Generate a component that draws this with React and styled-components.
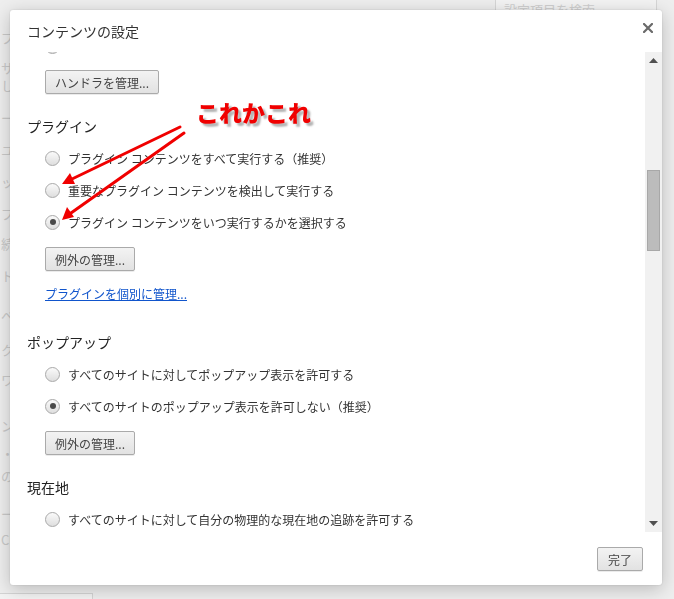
import styled, { createGlobalStyle } from 'styled-components';

const GlobalStyle = createGlobalStyle`
  html, body {
    margin: 0;
    padding: 0;
    background: #eeeeee;
    overflow: hidden;
  }
  body {
    font-family: "Noto Sans CJK JP", "Noto Sans", sans-serif;
  }
`;

const bgLines = [
  { t: 'プ', m: 30 },
  { t: 'サ', m: 14 },
  { t: 'し', m: 2 },
  { t: 'ー', m: 16 },
  { t: 'ユ', m: 16 },
  { t: 'ッ', m: 16 },
  { t: 'プ', m: 16 },
  { t: '続', m: 14 },
  { t: 'ト', m: 16 },
  { t: 'ベ', m: 24 },
  { t: 'ク', m: 18 },
  { t: 'ワ', m: 14 },
  { t: 'ン', m: 30 },
  { t: '・サ', m: 12 },
  { t: 'のス', m: 6 },
  { t: 'ー', m: 22 },
  { t: 'Ch', m: 10 },
];

const App = () => {
  return (
    <>
      <GlobalStyle />
      <Page>
        <BgColumn>
          {bgLines.map((line, index) => (
            <BgLine key={index} $top={line.m}>
              {line.t}
            </BgLine>
          ))}
        </BgColumn>
        <SearchBox>設定項目を検索</SearchBox>
        <BottomBox />
      </Page>

      <Dialog>
        <Header>
          <Title>コンテンツの設定</Title>
          <Close>
            <svg width="10" height="10" viewBox="0 0 10 10">
              <path
                d="M1 1 L9 9 M9 1 L1 9"
                stroke="#6a6a6a"
                strokeWidth="2.2"
                strokeLinecap="square"
              />
            </svg>
          </Close>
        </Header>

        <Body>
          <Content>
            <Inner>
              <RadioRow>
                <Radio />
              </RadioRow>
              <Button $top={8}>ハンドラを管理...</Button>

              <Heading $top={22}>プラグイン</Heading>
              <RadioGroup>
                <RadioRow>
                  <Radio />
                  <Label>プラグイン コンテンツをすべて実行する（推奨）</Label>
                </RadioRow>
                <RadioRow>
                  <Radio />
                  <Label>重要なプラグイン コンテンツを検出して実行する</Label>
                </RadioRow>
                <RadioRow>
                  <Radio $checked />
                  <Label>プラグイン コンテンツをいつ実行するかを選択する</Label>
                </RadioRow>
              </RadioGroup>
              <Button $top={9}>例外の管理...</Button>
              <Link>プラグインを個別に管理...</Link>

              <Heading $top={29}>ポップアップ</Heading>
              <RadioGroup>
                <RadioRow>
                  <Radio />
                  <Label>すべてのサイトに対してポップアップ表示を許可する</Label>
                </RadioRow>
                <RadioRow>
                  <Radio $checked />
                  <Label>すべてのサイトのポップアップ表示を許可しない（推奨）</Label>
                </RadioRow>
              </RadioGroup>
              <Button $top={9}>例外の管理...</Button>

              <Heading $top={22}>現在地</Heading>
              <RadioGroup>
                <RadioRow>
                  <Radio />
                  <Label>すべてのサイトに対して自分の物理的な現在地の追跡を許可する</Label>
                </RadioRow>
              </RadioGroup>
            </Inner>
          </Content>

          <Scrollbar>
            <ScrollArrow>
              <svg width="9" height="5" viewBox="0 0 9 5">
                <path d="M0 5 L4.5 0 L9 5 Z" fill="#505050" />
              </svg>
            </ScrollArrow>
            <Track>
              <Thumb />
            </Track>
            <ScrollArrow>
              <svg width="9" height="5" viewBox="0 0 9 5">
                <path d="M0 0 L4.5 5 L9 0 Z" fill="#505050" />
              </svg>
            </ScrollArrow>
          </Scrollbar>
        </Body>

        <Footer>
          <Button>完了</Button>
        </Footer>
      </Dialog>

      <Callout>これかこれ</Callout>
      <Arrows width="674" height="599" viewBox="0 0 674 599">
        <g stroke="#f00000" strokeWidth="3" strokeLinecap="round">
          <line x1="180" y1="127" x2="72" y2="179" />
          <line x1="184" y1="133" x2="71" y2="213" />
        </g>
        <g fill="#f00000">
          <polygon points="62,184 70,173 75,184" />
          <polygon points="62,220 67,207 74,217" />
        </g>
      </Arrows>
    </>
  );
};

const Page = styled.div`
  width: 674px;
  height: 599px;
  position: relative;
  background: #eeeeee;
`;

const BgColumn = styled.div`
  display: flex;
  flex-direction: column;
  padding-left: 1px;
`;

const BgLine = styled.div`
  margin-top: ${(p) => p.$top}px;
  font-size: 13px;
  line-height: 16px;
  color: #c9c9c9;
  white-space: nowrap;
`;

const SearchBox = styled.div`
  position: absolute;
  top: -1px;
  left: 495px;
  width: 152px;
  height: 20px;
  border: 1px solid #d6d6d6;
  padding-left: 8px;
  font-size: 13px;
  line-height: 20px;
  color: #cfcfcf;
  background: #f3f3f3;
`;

const BottomBox = styled.div`
  position: absolute;
  left: -2px;
  top: 593px;
  width: 93px;
  height: 12px;
  border: 1px solid #d4d4d4;
  background: #f3f3f3;
`;

const Dialog = styled.div`
  position: fixed;
  left: 10px;
  top: 10px;
  width: 652px;
  height: 575px;
  background: #fff;
  border-radius: 3px;
  box-shadow: 0 4px 18px rgba(0, 0, 0, 0.22), 0 0 2px rgba(0, 0, 0, 0.15);
  display: flex;
  flex-direction: column;
  overflow: hidden;
`;

const Header = styled.div`
  height: 42px;
  flex: none;
  display: flex;
  align-items: flex-start;
  justify-content: space-between;
  padding: 12px 9px 0 17px;
  box-sizing: border-box;
`;

const Title = styled.div`
  font-size: 14px;
  line-height: 18px;
  color: #333;
`;

const Close = styled.div`
  display: flex;
  margin-top: 1px;
`;

const Body = styled.div`
  height: 480px;
  flex: none;
  display: flex;
`;

const Content = styled.div`
  flex: 1;
  overflow: hidden;
`;

const Inner = styled.div`
  margin-top: -22px;
  padding-left: 17px;
  display: flex;
  flex-direction: column;
  align-items: flex-start;
`;

const Heading = styled.div`
  margin-top: ${(p) => p.$top}px;
  font-size: 14px;
  line-height: 20px;
  color: #222;
`;

const RadioGroup = styled.div`
  display: flex;
  flex-direction: column;
  margin-top: 6px;
  padding-left: 18px;
`;

const RadioRow = styled.div`
  height: 32px;
  display: flex;
  align-items: center;
  gap: 8px;
  padding-left: 18px;

  ${RadioGroup} & {
    padding-left: 0;
  }
`;

const Radio = styled.span`
  width: 13px;
  height: 13px;
  flex: none;
  border-radius: 50%;
  border: 1px solid #a9a9a9;
  background: linear-gradient(#fafafa, #dedede);
  display: flex;
  align-items: center;
  justify-content: center;

  &::after {
    content: '';
    width: 6px;
    height: 6px;
    border-radius: 50%;
    background: #4a4a4a;
    display: ${(p) => (p.$checked ? 'block' : 'none')};
  }
`;

const Label = styled.span`
  font-size: 12px;
  color: #333;
  white-space: nowrap;
`;

const Button = styled.button`
  margin-top: ${(p) => p.$top || 0}px;
  margin-left: ${(p) => (p.$top ? 18 : 0)}px;
  height: 24px;
  padding: 0 9px;
  font-family: inherit;
  font-size: 12px;
  color: #444;
  border: 1px solid #aaa;
  border-radius: 2px;
  background: linear-gradient(#f3f3f3, #e2e2e2);
  box-shadow: 0 1px 0 rgba(0, 0, 0, 0.08);
`;

const Link = styled.a`
  margin-top: 14px;
  margin-left: 18px;
  font-size: 12px;
  line-height: 18px;
  color: #1155cc;
  text-decoration: underline;
`;

const Scrollbar = styled.div`
  width: 17px;
  flex: none;
  background: #f1f1f1;
  display: flex;
  flex-direction: column;
`;

const ScrollArrow = styled.div`
  height: 17px;
  display: flex;
  align-items: center;
  justify-content: center;
`;

const Track = styled.div`
  flex: 1;
  padding-top: 101px;
  display: flex;
  justify-content: center;
`;

const Thumb = styled.div`
  width: 11px;
  height: 79px;
  background: #bcbcbc;
  border: 1px solid #a8a8a8;
`;

const Footer = styled.div`
  flex: 1;
  display: flex;
  justify-content: flex-end;
  align-items: flex-start;
  padding: 15px 19px 0 0;

  ${Button} {
    height: 24px;
    padding: 0 10px;
  }
`;

const Callout = styled.div`
  position: absolute;
  left: 196px;
  top: 97px;
  font-size: 23px;
  font-weight: 900;
  line-height: 30px;
  color: #f00000;
  text-shadow: 3px 3px 2px rgba(0, 0, 0, 0.3);
  font-family: "Noto Sans CJK JP", sans-serif;
`;

const Arrows = styled.svg`
  position: absolute;
  left: 0;
  top: 0;
  pointer-events: none;
`;

export default App;
